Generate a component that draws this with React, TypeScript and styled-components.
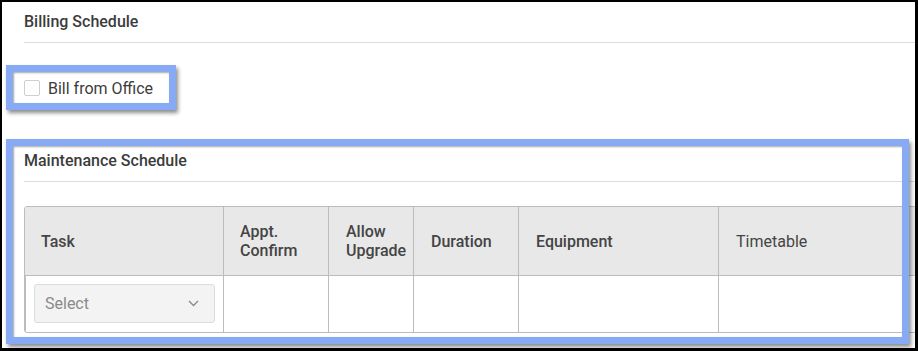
import styled, { createGlobalStyle } from "styled-components"

const GlobalStyle = createGlobalStyle`
  html, body {
    margin: 0;
    padding: 0;
    background: #fff;
  }
  body {
    font-family: Roboto, "Liberation Sans", Arial, sans-serif;
    color: #3a3a3a;
  }
`

const Frame = styled.div`
  position: relative;
  box-sizing: border-box;
  width: 918px;
  height: 351px;
  border: 2px solid #000;
  border-right-width: 3px;
  border-bottom-width: 3px;
  overflow: hidden;
  background: #fff;
`

const Content = styled.div`
  padding-left: 22px;
  width: 1000px;
`

const SectionTitle = styled.div`
  box-sizing: border-box;
  height: 41px;
  padding-top: 10px;
  font-size: 16px;
  font-weight: 500;
  line-height: 19px;
  color: #3c3c3c;
  border-bottom: 1px solid #dcdcdc;
`

const CheckRow = styled.label`
  display: flex;
  align-items: center;
  gap: 8px;
  height: 18px;
  margin-top: 36px;
  font-size: 16px;
  color: #3c3c3c;
`

const Box = styled.span`
  width: 16px;
  height: 16px;
  box-sizing: border-box;
  border: 1px solid #cfcfcf;
  border-radius: 2px;
  background: #fff;
`

const MaintSection = styled.div`
  margin-top: 44px;
`

const Table = styled.div`
  display: grid;
  grid-template-columns: 198px 105px 85px 105px 200px 220px;
  grid-template-rows: 69px 56px;
  width: 914px;
  margin-top: 24px;
  border: 1px solid #bcbcbc;
  border-radius: 3px;
  overflow: hidden;
`

const HeadCell = styled.div<{ $pad: number; $light?: boolean }>`
  display: flex;
  align-items: center;
  padding-left: ${(p) => p.$pad}px;
  background: #e8e8e8;
  border-bottom: 1px solid #bcbcbc;
  border-left: 1px solid #bcbcbc;
  font-size: 16px;
  font-weight: ${(p) => (p.$light ? 400 : 500)};
  line-height: 19px;
  color: #444;

  &:first-child {
    border-left: none;
  }
`

const BodyCell = styled.div`
  border-left: 1px solid #bcbcbc;
  padding: 8px;

  &:first-of-type {
    border-left: none;
  }
`

const SelectBox = styled.div`
  display: flex;
  align-items: center;
  justify-content: space-between;
  box-sizing: border-box;
  width: 181px;
  height: 39px;
  padding: 0 15px 0 10px;
  background: #f3f3f3;
  border: 1px solid #dcdcdc;
  border-radius: 3px;
  font-size: 16px;
  color: #8a8a8a;
`

const Highlight = styled.div`
  position: absolute;
  box-sizing: border-box;
  border: 7px solid #88a9f4;
  box-shadow: 2px 3px 4px rgba(0, 0, 0, 0.45), inset 1px 1px 2px rgba(0, 0, 0, 0.35);
  pointer-events: none;
`

const headers = [
  { label: "Task", pad: 16 },
  { label: "Appt.", second: "Confirm", pad: 16 },
  { label: "Allow", second: "Upgrade", pad: 17 },
  { label: "Duration", pad: 17 },
  { label: "Equipment", pad: 17 },
  { label: "Timetable", pad: 17, light: true },
]

const Chevron = () => (
  <svg width="11" height="7" viewBox="0 0 11 7" fill="none">
    <path d="M1 1l4.5 4.5L10 1" stroke="#8a8a8a" strokeWidth="1.4" />
  </svg>
)

export default function App() {
  return (
    <>
      <GlobalStyle />
      <Frame>
        <Content>
          <SectionTitle>Billing Schedule</SectionTitle>
          <CheckRow>
            <Box />
            Bill from Office
          </CheckRow>
          <MaintSection>
            <SectionTitle>Maintenance Schedule</SectionTitle>
            <Table>
              {headers.map((h) => (
                <HeadCell key={h.label} $pad={h.pad} $light={h.light}>
                  {h.second ? (
                    <span>
                      {h.label}
                      <br />
                      {h.second}
                    </span>
                  ) : (
                    h.label
                  )}
                </HeadCell>
              ))}
              <BodyCell>
                <SelectBox>
                  Select
                  <Chevron />
                </SelectBox>
              </BodyCell>
              <BodyCell />
              <BodyCell />
              <BodyCell />
              <BodyCell />
              <BodyCell />
            </Table>
          </MaintSection>
        </Content>
        <Highlight style={{ left: 4, top: 63, width: 170, height: 45 }} />
        <Highlight style={{ left: 4, top: 137, width: 903, height: 205 }} />
      </Frame>
    </>
  )
}
